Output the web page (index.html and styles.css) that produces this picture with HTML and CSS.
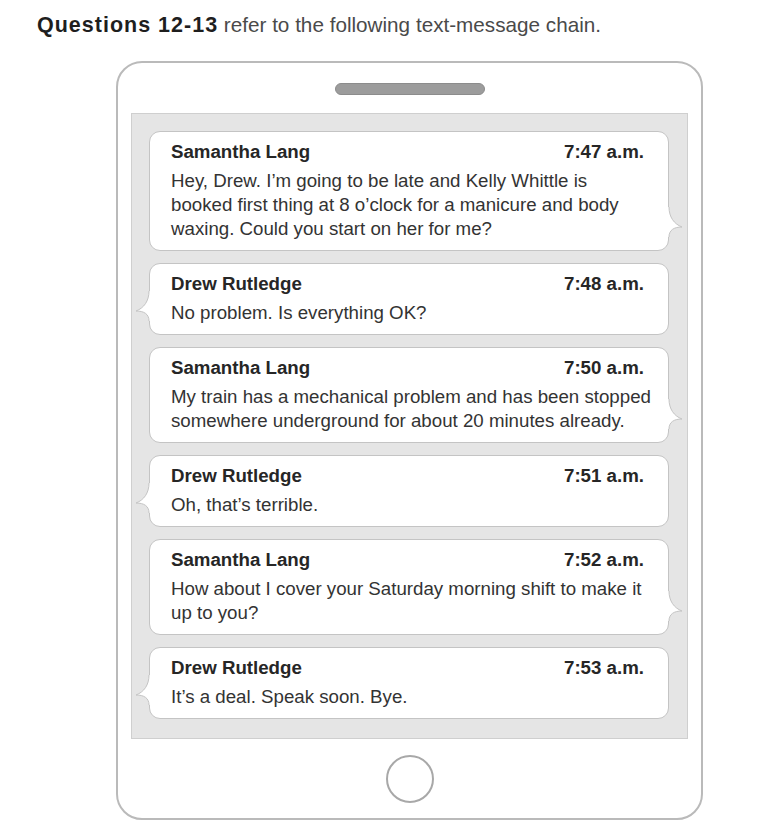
FILE: index.html
```html
<!DOCTYPE html>
<html lang="en">
<head>
<meta charset="utf-8">
<title>Questions 12-13</title>
<link rel="stylesheet" href="styles.css">
</head>
<body>
  <p class="prompt"><strong class="prompt-num">Questions 12-13</strong> refer to the following text-message chain.</p>

  <div class="phone">
    <div class="speaker"></div>

    <div class="screen">
      <div class="bubble from-right">
        <div class="bubble-head"><span class="sender">Samantha Lang</span><span class="time">7:47 a.m.</span></div>
        <p class="msg">Hey, Drew. I’m going to be late and Kelly Whittle is<br>booked first thing at 8 o’clock for a manicure and body<br>waxing. Could you start on her for me?</p>
        <svg class="tail" viewBox="-2 0 18 32" width="18" height="32"><path class="tail-fill" d="M1 0 C1 10 6 17 14 20 C6 20 1 23 1 30 L-2 30 L-2 0 Z"/><path class="tail-line" d="M1 0 C1 10 6 17 14 20 C6 20 1 23 1 30"/></svg>
      </div>

      <div class="bubble from-left">
        <div class="bubble-head"><span class="sender">Drew Rutledge</span><span class="time">7:48 a.m.</span></div>
        <p class="msg">No problem. Is everything OK?</p>
        <svg class="tail" viewBox="-2 0 18 32" width="18" height="32"><path class="tail-fill" d="M1 0 C1 10 6 17 14 20 C6 20 1 23 1 30 L-2 30 L-2 0 Z"/><path class="tail-line" d="M1 0 C1 10 6 17 14 20 C6 20 1 23 1 30"/></svg>
      </div>

      <div class="bubble from-right">
        <div class="bubble-head"><span class="sender">Samantha Lang</span><span class="time">7:50 a.m.</span></div>
        <p class="msg">My train has a mechanical problem and has been stopped<br>somewhere underground for about 20 minutes already.</p>
        <svg class="tail" viewBox="-2 0 18 32" width="18" height="32"><path class="tail-fill" d="M1 0 C1 10 6 17 14 20 C6 20 1 23 1 30 L-2 30 L-2 0 Z"/><path class="tail-line" d="M1 0 C1 10 6 17 14 20 C6 20 1 23 1 30"/></svg>
      </div>

      <div class="bubble from-left">
        <div class="bubble-head"><span class="sender">Drew Rutledge</span><span class="time">7:51 a.m.</span></div>
        <p class="msg">Oh, that’s terrible.</p>
        <svg class="tail" viewBox="-2 0 18 32" width="18" height="32"><path class="tail-fill" d="M1 0 C1 10 6 17 14 20 C6 20 1 23 1 30 L-2 30 L-2 0 Z"/><path class="tail-line" d="M1 0 C1 10 6 17 14 20 C6 20 1 23 1 30"/></svg>
      </div>

      <div class="bubble from-right">
        <div class="bubble-head"><span class="sender">Samantha Lang</span><span class="time">7:52 a.m.</span></div>
        <p class="msg">How about I cover your Saturday morning shift to make it<br>up to you?</p>
        <svg class="tail" viewBox="-2 0 18 32" width="18" height="32"><path class="tail-fill" d="M1 0 C1 10 6 17 14 20 C6 20 1 23 1 30 L-2 30 L-2 0 Z"/><path class="tail-line" d="M1 0 C1 10 6 17 14 20 C6 20 1 23 1 30"/></svg>
      </div>

      <div class="bubble from-left">
        <div class="bubble-head"><span class="sender">Drew Rutledge</span><span class="time">7:53 a.m.</span></div>
        <p class="msg">It’s a deal. Speak soon. Bye.</p>
        <svg class="tail" viewBox="-2 0 18 32" width="18" height="32"><path class="tail-fill" d="M1 0 C1 10 6 17 14 20 C6 20 1 23 1 30 L-2 30 L-2 0 Z"/><path class="tail-line" d="M1 0 C1 10 6 17 14 20 C6 20 1 23 1 30"/></svg>
      </div>
    </div>

    <div class="home-button"></div>
  </div>
</body>
</html>
```

FILE: styles.css
```css
* {
  box-sizing: border-box;
}

body {
  margin: 0;
  background: #ffffff;
  font-family: "Liberation Sans", Arial, sans-serif;
  color: #333333;
}

/* Question prompt above the phone */
.prompt {
  margin: 13px 0 0 37px;
  font-size: 20.7px;
  line-height: 24px;
  color: #4a4a4a;
}

.prompt-num {
  font-size: 21.5px;
  font-weight: 700;
  letter-spacing: 1px;
  color: #1e1e1e;
}

/* Phone body */
.phone {
  width: 587px;
  margin: 24px 0 0 116px;
  padding: 20px 13px 15px;
  border: 2px solid #bababa;
  border-radius: 26px;
  display: flex;
  flex-direction: column;
  align-items: center;
}

.speaker {
  width: 150px;
  height: 12px;
  border-radius: 6px;
  background: #9c9c9c;
  border: 1px solid #8c8c8c;
  margin-bottom: 18px;
}

.screen {
  align-self: stretch;
  background: #e5e5e5;
  border: 1px solid #cfcfcf;
  padding: 17px 18px 19px 17px;
  display: flex;
  flex-direction: column;
  gap: 12px;
}

/* Message bubbles */
.bubble {
  position: relative;
  background: #ffffff;
  border: 1px solid #c4c4c4;
  border-radius: 11px;
  padding: 7.5px 12px 9px 21px;
}

.bubble-head {
  display: flex;
  justify-content: space-between;
  padding-right: 12px;
  font-size: 18.7px;
  line-height: 23px;
  font-weight: 700;
  color: #262626;
}

.msg {
  margin: 6.5px 0 0;
  font-size: 18.7px;
  line-height: 24px;
  color: #333333;
  white-space: nowrap;
}

/* Speech tail on the bubble's outer edge */
.tail {
  position: absolute;
  bottom: 11px;
  overflow: visible;
}

.from-right .tail {
  right: -16px;
}

.from-left .tail {
  left: -16px;
  transform: scaleX(-1);
}

.tail-fill {
  fill: #ffffff;
}

.tail-line {
  fill: none;
  stroke: #c4c4c4;
  stroke-width: 1;
}

/* Round home button */
.home-button {
  width: 48px;
  height: 48px;
  margin-top: 16px;
  border: 2px solid #a8a8a8;
  border-radius: 50%;
}
```
